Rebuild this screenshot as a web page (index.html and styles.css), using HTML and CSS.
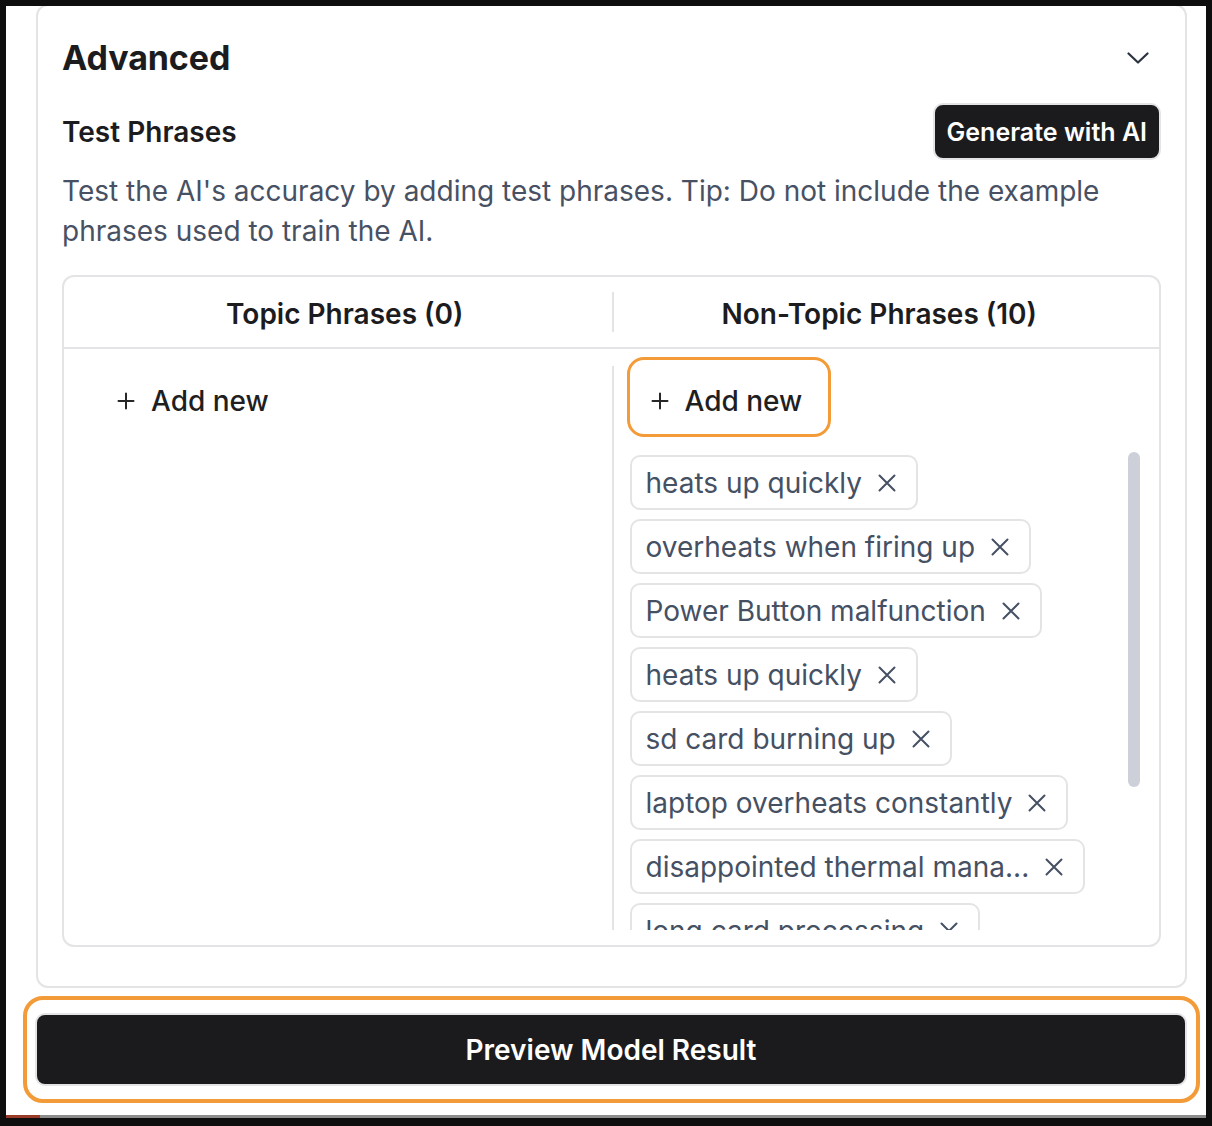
FILE: index.html
```html
<!DOCTYPE html>
<html lang="en">
<head>
<meta charset="utf-8">
<title>Advanced</title>
<link rel="stylesheet" href="styles.css">
</head>
<body>
<div class="frame">
  <section class="card">
    <div class="card-head">
      <h1 class="title">Advanced</h1>
      <svg class="chev" width="22" height="14" viewBox="0 0 22 14" aria-hidden="true"><path d="M1.5 2.5 L11 11.5 L20.5 2.5"/></svg>
    </div>
    <div class="tp-row">
      <h2 class="subtitle">Test Phrases</h2>
      <button class="gen">Generate with AI</button>
    </div>
    <p class="desc">Test the AI's accuracy by adding test phrases. Tip: Do not include the example phrases used to train the AI.</p>
    <div class="table">
      <div class="thead">
        <div class="th th-left">Topic Phrases (0)</div>
        <div class="th th-right">Non-Topic Phrases (10)</div>
      </div>
      <div class="tbody">
        <div class="col col-left">
          <button class="add">
            <svg class="plus" width="18" height="18" viewBox="0 0 18 18" aria-hidden="true"><path d="M9 1.5V16.5M1.5 9H16.5"/></svg>
            <span>Add new</span>
          </button>
        </div>
        <div class="col col-right">
          <button class="add add-focus">
            <svg class="plus" width="18" height="18" viewBox="0 0 18 18" aria-hidden="true"><path d="M9 1.5V16.5M1.5 9H16.5"/></svg>
            <span>Add new</span>
          </button>
          <div class="chips-wrap">
            <div class="chips">
              <div class="chip"><span>heats up quickly</span><svg class="x" width="18" height="18" viewBox="0 0 18 18"><path d="M1.5 1.5L16.5 16.5M16.5 1.5L1.5 16.5"/></svg></div>
              <div class="chip"><span>overheats when firing up</span><svg class="x" width="18" height="18" viewBox="0 0 18 18"><path d="M1.5 1.5L16.5 16.5M16.5 1.5L1.5 16.5"/></svg></div>
              <div class="chip"><span>Power Button malfunction</span><svg class="x" width="18" height="18" viewBox="0 0 18 18"><path d="M1.5 1.5L16.5 16.5M16.5 1.5L1.5 16.5"/></svg></div>
              <div class="chip"><span>heats up quickly</span><svg class="x" width="18" height="18" viewBox="0 0 18 18"><path d="M1.5 1.5L16.5 16.5M16.5 1.5L1.5 16.5"/></svg></div>
              <div class="chip"><span>sd card burning up</span><svg class="x" width="18" height="18" viewBox="0 0 18 18"><path d="M1.5 1.5L16.5 16.5M16.5 1.5L1.5 16.5"/></svg></div>
              <div class="chip"><span>laptop overheats constantly</span><svg class="x" width="18" height="18" viewBox="0 0 18 18"><path d="M1.5 1.5L16.5 16.5M16.5 1.5L1.5 16.5"/></svg></div>
              <div class="chip"><span>disappointed thermal mana...</span><svg class="x" width="18" height="18" viewBox="0 0 18 18"><path d="M1.5 1.5L16.5 16.5M16.5 1.5L1.5 16.5"/></svg></div>
              <div class="chip"><span>long card processing</span><svg class="x" width="18" height="18" viewBox="0 0 18 18"><path d="M1.5 1.5L16.5 16.5M16.5 1.5L1.5 16.5"/></svg></div>
              <div class="chip"><span>fan noise too loud</span><svg class="x" width="18" height="18" viewBox="0 0 18 18"><path d="M1.5 1.5L16.5 16.5M16.5 1.5L1.5 16.5"/></svg></div>
              <div class="chip"><span>battery drains fast</span><svg class="x" width="18" height="18" viewBox="0 0 18 18"><path d="M1.5 1.5L16.5 16.5M16.5 1.5L1.5 16.5"/></svg></div>
            </div>
            <div class="track"><div class="thumb"></div></div>
          </div>
        </div>
      </div>
    </div>
  </section>
  <div class="preview-ring">
    <button class="preview">Preview Model Result</button>
  </div>
  <div class="foot"></div>
</div>
</body>
</html>
```

FILE: styles.css
```css
* { box-sizing: border-box; }

html, body {
  margin: 0;
  padding: 0;
}

body {
  background: #0e0e0e;
  font-family: Inter, "Noto Sans", "Liberation Sans", sans-serif;
  color: #1c1c1e;
}

button {
  font-family: inherit;
  cursor: pointer;
}

.frame {
  margin: 6px 6px 0 6px;
  width: 1200px;
  height: 1112px;
  background: #ffffff;
  display: flex;
  flex-direction: column;
  overflow: hidden;
}

.card {
  margin: -2px 19px 0 30px;
  border: 2px solid #e4e4e7;
  border-radius: 12px;
  padding: 0 24px 39px 24px;
}

.card-head {
  height: 50px;
  margin-top: 27px;
  display: flex;
  align-items: center;
  justify-content: space-between;
}

.title {
  margin: 0;
  font-size: 34px;
  line-height: 50px;
  font-weight: 700;
  color: #1c1c1e;
  letter-spacing: -0.1px;
}

.chev {
  margin-right: 12px;
  fill: none;
  stroke: #2b3240;
  stroke-width: 2.2;
  stroke-linecap: round;
  stroke-linejoin: round;
}

.tp-row {
  margin-top: 20px;
  display: flex;
  align-items: center;
  justify-content: space-between;
}

.subtitle {
  margin: 0;
  font-size: 28px;
  font-weight: 600;
  line-height: 34px;
  color: #1c1c1e;
}

.gen {
  height: 57px;
  padding: 0 12px;
  background: #1b1b1d;
  color: #ffffff;
  border: 2px solid #e4e4e7;
  border-radius: 10px;
  font-size: 25px;
  font-weight: 600;
}

.desc {
  margin: 11px 0 0 0;
  font-size: 28px;
  line-height: 40px;
  color: #485163;
}

.table {
  margin-top: 24px;
  border: 2px solid #e4e4e7;
  border-radius: 12px;
  height: 672px;
  display: flex;
  flex-direction: column;
}

.thead {
  display: grid;
  grid-template-columns: 1fr 1fr;
  padding: 15px 0;
  border-bottom: 2px solid #e4e4e7;
}

.th {
  height: 40px;
  padding-top: 4px;
  line-height: 36px;
  text-align: center;
  font-size: 28px;
  font-weight: 600;
  color: #1c1c1e;
  white-space: nowrap;
}

.th-left { padding-left: 14px; }

.th-right {
  border-left: 2px solid #e4e4e7;
  padding-right: 14px;
}

.tbody {
  flex: 1;
  min-height: 0;
  display: grid;
  grid-template-columns: 1fr 1fr;
  padding: 17px 0 15px 0;
}

.col {
  min-height: 0;
  display: flex;
  flex-direction: column;
  align-items: flex-start;
}

.col-left { padding-left: 38px; }

.col-right {
  border-left: 2px solid #e4e4e7;
  padding: 0 19px 0 16px;
}

.add {
  height: 62px;
  display: inline-flex;
  align-items: center;
  gap: 16px;
  padding: 8px 20px 0 15px;
  background: transparent;
  border: 0;
  border-radius: 8px;
  font-size: 28px;
  font-weight: 500;
  color: #1f1f22;
  flex: none;
}

.add-focus {
  margin-left: 6px;
  padding-top: 8px;
  outline: 3px solid #f29b38;
  outline-offset: 6px;
}

.plus {
  fill: none;
  stroke: #27272a;
  stroke-width: 2;
  stroke-linecap: round;
}

.chips-wrap {
  margin-top: 24px;
  flex: 1;
  min-height: 0;
  width: 100%;
  display: flex;
}

.chips {
  flex: 1;
  min-width: 0;
  overflow: hidden;
  padding-top: 3px;
  display: flex;
  flex-direction: column;
  align-items: flex-start;
  gap: 9px;
}

.chip {
  flex: none;
  height: 55px;
  display: inline-flex;
  align-items: center;
  gap: 16px;
  padding: 0 20px 0 14px;
  border: 2px solid #e4e4e7;
  border-radius: 10px;
  font-size: 28px;
  color: #465063;
  white-space: nowrap;
}

.x {
  fill: none;
  stroke: #465063;
  stroke-width: 2;
  stroke-linecap: round;
}

.track {
  width: 12px;
  flex: none;
}

.thumb {
  height: 335px;
  border-radius: 6px;
  background: #cdd0d8;
}

.preview-ring {
  margin: 8px 6px 0 17px;
  border: 4px solid #f29b38;
  border-radius: 20px;
  padding: 13px 9px 13px 8px;
}

.preview {
  display: block;
  width: 100%;
  height: 73px;
  background: #1b1b1d;
  color: #ffffff;
  border: 2px solid #e4e4e7;
  border-radius: 10px;
  font-size: 28px;
  font-weight: 600;
}

.foot {
  margin-top: auto;
  height: 3px;
  background: linear-gradient(to right, #9a3b2a 0 34px, #8c8c8c 34px);
}
```
